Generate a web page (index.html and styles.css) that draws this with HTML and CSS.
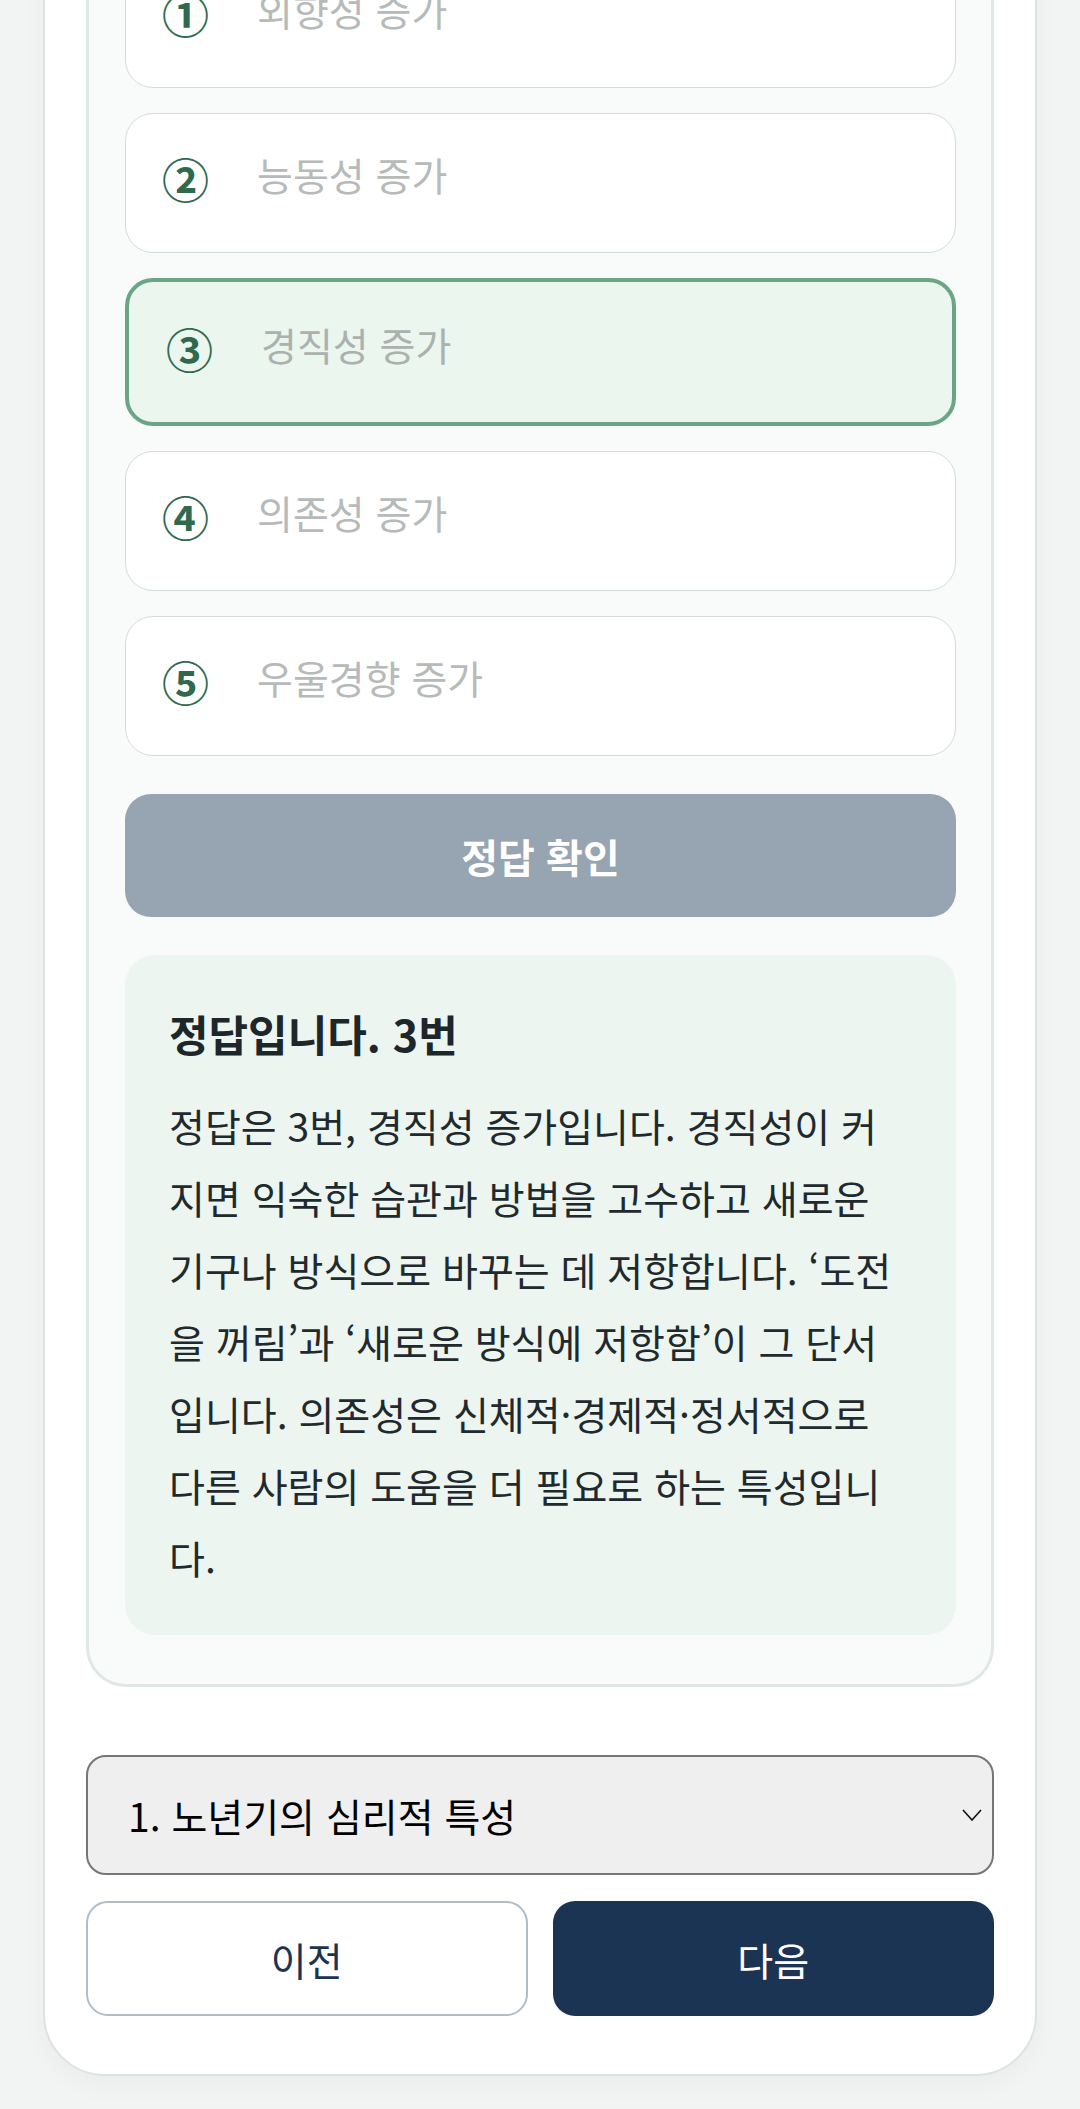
FILE: index.html
```html
<!DOCTYPE html>
<html lang="ko">
<head>
<meta charset="utf-8">
<title>노년기의 심리적 특성</title>
<link rel="stylesheet" href="styles.css">
</head>
<body>
<main class="shell">
  <section class="quiz">
    <div class="options">
      <button class="option" type="button"><span class="num">①</span><span class="label">외향성 증가</span></button>
      <button class="option" type="button"><span class="num">②</span><span class="label">능동성 증가</span></button>
      <button class="option selected" type="button"><span class="num">③</span><span class="label">경직성 증가</span></button>
      <button class="option" type="button"><span class="num">④</span><span class="label">의존성 증가</span></button>
      <button class="option" type="button"><span class="num">⑤</span><span class="label">우울경향 증가</span></button>
    </div>
    <button class="check" type="button">정답 확인</button>
    <div class="explain">
      <h3 class="explain-title">정답입니다. 3번</h3>
      <p class="explain-body">정답은 3번, 경직성 증가입니다. 경직성이 커지면 익숙한 습관과 방법을 고수하고 새로운 기구나 방식으로 바꾸는 데 저항합니다. ‘도전을 꺼림’과 ‘새로운 방식에 저항함’이 그 단서입니다. 의존성은 신체적·경제적·정서적으로 다른 사람의 도움을 더 필요로 하는 특성입니다.</p>
    </div>
  </section>
  <div class="select-wrap">
    <select class="chapter">
      <option>1. 노년기의 심리적 특성</option>
    </select>
    <svg class="chev" viewBox="0 0 20 12" width="20" height="12" aria-hidden="true"><path d="M1 1 L10 11 L19 1" fill="none" stroke="#111" stroke-width="1.6"/></svg>
  </div>
  <nav class="pager">
    <button class="btn prev" type="button">이전</button>
    <button class="btn next" type="button">다음</button>
  </nav>
</main>
</body>
</html>
```
FILE: styles.css
```css
* { box-sizing: border-box; }
html, body { margin: 0; padding: 0; }
body {
  background: #f2f4f3;
  font-family: "Noto Sans CJK KR", "Noto Sans", sans-serif;
  color: #1f2a2e;
}
.shell {
  margin: -93px 43px 32px 43px;
  background: #ffffff;
  border: 2px solid #dce3e1;
  border-radius: 0 0 62px 62px;
  padding: 0 41px 58px;
  box-shadow: 0 8px 28px rgba(0, 0, 0, 0.035);
}
.quiz {
  background: #f8fbfa;
  border: 3px solid #dfe8e5;
  border-radius: 40px;
  padding: 36px 35px 49px 36px;
}
.options {
  display: flex;
  flex-direction: column;
  gap: 25px;
}
.option {
  display: flex;
  align-items: flex-start;
  height: 140px;
  width: 100%;
  margin: 0;
  padding: 33px 36px 0 36px;
  background: #ffffff;
  border: 1.5px solid #d3dcd9;
  border-radius: 28px;
  font-family: inherit;
  text-align: left;
  cursor: pointer;
}
.option.selected {
  height: 148px;
  padding-top: 35px;
  padding-left: 37px;
  background: #ebf6ee;
  border: 4px solid #6aa584;
}
.num {
  display: inline-block;
  width: 95px;
  margin-top: 4px;
  font-size: 47px;
  line-height: 54px;
  font-weight: 700;
  color: #2f6a4f;
}
.label {
  font-size: 39px;
  line-height: 54px;
  color: #b6bab9;
}
.option.selected .label { color: #abb1af; }
.check {
  display: block;
  width: 100%;
  height: 123px;
  margin: 38px 0 0;
  border: 0;
  border-radius: 26px;
  background: #97a4b1;
  color: #ffffff;
  font-family: inherit;
  font-size: 40px;
  font-weight: 700;
}
.explain {
  margin-top: 38px;
  background: #edf5f0;
  border-radius: 30px;
  padding: 42px 50px 42px 44px;
}
.explain-title {
  margin: 0 0 20px;
  font-size: 43px;
  line-height: 72px;
  font-weight: 700;
  color: #1c262b;
}
.explain-body {
  margin: 0;
  font-size: 39px;
  line-height: 72px;
  color: #1f2a2e;
}
.select-wrap {
  position: relative;
  margin-top: 68px;
}
.chapter {
  display: block;
  width: 100%;
  height: 120px;
  appearance: none;
  -webkit-appearance: none;
  background: #efefef;
  border: 2px solid #767676;
  border-radius: 20px;
  padding: 0 60px 0 40px;
  font-family: inherit;
  font-size: 39px;
  color: #000000;
}
.chev {
  position: absolute;
  right: 12px;
  top: 54px;
  pointer-events: none;
}
.pager {
  display: grid;
  grid-template-columns: 1fr 1fr;
  gap: 25px;
  margin-top: 26px;
}
.btn {
  height: 115px;
  border-radius: 22px;
  font-family: inherit;
  font-size: 39px;
}
.prev {
  background: #ffffff;
  border: 2px solid #b0bcc8;
  color: #1a3452;
}
.next {
  background: #1b3453;
  border: 0;
  color: #ffffff;
}
```
